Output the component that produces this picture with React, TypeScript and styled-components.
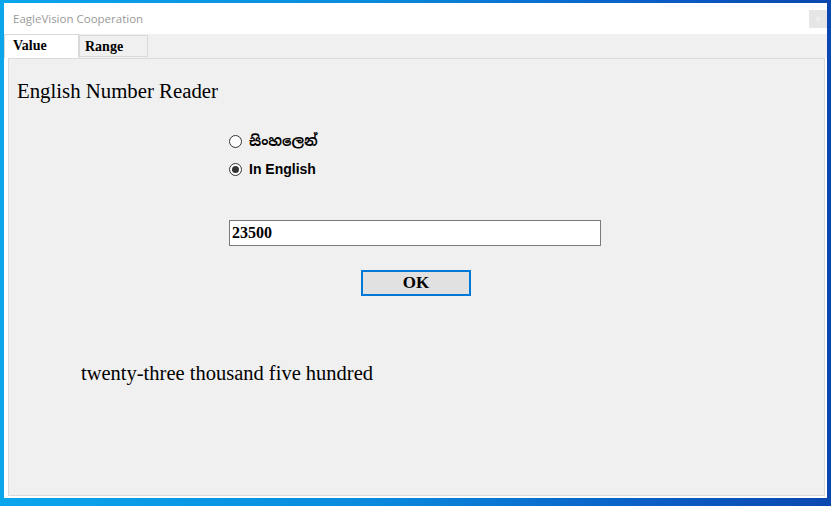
import React from "react";
import styled, { createGlobalStyle } from "styled-components";

const Global = createGlobalStyle`
  html, body { margin: 0; padding: 0; }
  body { width: 831px; height: 506px; overflow: hidden; }
`;

const Desktop = styled.div`
  width: 831px;
  height: 506px;
  box-sizing: border-box;
  padding: 3px 4px 8px 4px;
  background: linear-gradient(to right, #0aa6ec 0%, #0a8ade 45%, #0a5cc4 80%, #0a48b0 100%);
  display: flex;
`;

const Window = styled.div`
  flex: 1;
  display: flex;
  flex-direction: column;
  background: #ffffff;
`;

const TitleBar = styled.div`
  height: 31px;
  display: flex;
  align-items: center;
  justify-content: space-between;
  padding: 0 0 0 9px;
  font-family: "Open Sans", "Noto Sans", sans-serif;
  font-size: 11.5px;
  color: #9a9a9a;
`;

const CloseBox = styled.div`
  width: 18px;
  height: 18px;
  background: #e6e6e6;
  color: #f6f6f6;
  font-size: 10px;
  display: flex;
  align-items: center;
  justify-content: center;
`;

const TabRow = styled.div`
  height: 24px;
  display: flex;
  align-items: flex-end;
  background: linear-gradient(to right, #ffffff 0 1px, #f0f0f0 1px);
`;

const Tab = styled.div<{ $active?: boolean }>`
  box-sizing: border-box;
  height: ${(p) => (p.$active ? "24px" : "22px")};
  width: ${(p) => (p.$active ? "75px" : "69px")};
  padding: ${(p) => (p.$active ? "3px 0 0 8px" : "3px 0 0 5px")};
  margin-bottom: ${(p) => (p.$active ? "0" : "1px")};
  background: ${(p) => (p.$active ? "#ffffff" : "#f0f0f0")};
  border: 1px solid #d9d9d9;
  border-bottom: ${(p) => (p.$active ? "none" : "1px solid #d9d9d9")};
  font-family: "Liberation Serif", "Times New Roman", serif;
  font-weight: bold;
  font-size: 14px;
  color: #000;
`;

const PanelWrap = styled.div`
  flex: 1;
  display: flex;
  background: #ffffff;
  padding: 0 2px 2px 4px;
`;

const Panel = styled.div`
  flex: 1;
  background: #f0f0f0;
  border: 1px solid #dadada;
  display: flex;
  flex-direction: column;
  padding: 20px 0 0 8px;
`;

const Heading = styled.div`
  font-family: "Liberation Serif", "Times New Roman", serif;
  font-size: 20.8px;
  line-height: 23px;
  color: #000;
`;

const Form = styled.div`
  display: flex;
  flex-direction: column;
  margin: 32px 0 0 212px;
`;

const RadioRow = styled.label`
  display: flex;
  align-items: center;
  gap: 7px;
  height: 14px;
  margin-bottom: 14px;
  font-family: "Liberation Sans", Arial, "Noto Sans Sinhala", "Noto Sans", sans-serif;
  font-weight: bold;
  font-size: 14px;
  color: #000;
`;

const RadioCircle = styled.span<{ $checked?: boolean }>`
  box-sizing: border-box;
  width: 13px;
  height: 13px;
  border-radius: 50%;
  border: 1px solid #333;
  background: #fff;
  display: flex;
  align-items: center;
  justify-content: center;
  &::after {
    content: "";
    width: 7px;
    height: 7px;
    border-radius: 50%;
    background: ${(p) => (p.$checked ? "#333" : "transparent")};
  }
`;

const NumberInput = styled.div`
  box-sizing: border-box;
  margin-top: 30px;
  width: 372px;
  height: 26px;
  background: #fff;
  border: 1px solid #7a7a7a;
  padding: 3px 0 0 2px;
  font-family: "Liberation Serif", "Times New Roman", serif;
  font-weight: bold;
  font-size: 16px;
  color: #000;
`;

const OkButton = styled.div`
  box-sizing: border-box;
  margin: 24px 0 0 132px;
  width: 110px;
  height: 26px;
  background: #e1e1e1;
  border: 2px solid #0078d7;
  display: flex;
  align-items: center;
  justify-content: center;
  font-family: "Liberation Serif", "Times New Roman", serif;
  font-weight: bold;
  font-size: 17px;
  color: #000;
`;

const Result = styled.div`
  margin: 65px 0 0 64px;
  font-family: "Liberation Serif", "Times New Roman", serif;
  font-size: 20.5px;
  line-height: 24px;
  color: #000;
`;

export default function App() {
  return (
    <Desktop>
      <Global />
      <Window>
        <TitleBar>
          <span>EagleVision Cooperation</span>
          <CloseBox>×</CloseBox>
        </TitleBar>
        <TabRow>
          <Tab $active>Value</Tab>
          <Tab>Range</Tab>
        </TabRow>
        <PanelWrap>
          <Panel>
            <Heading>English Number Reader</Heading>
            <Form>
              <RadioRow>
                <RadioCircle />
                සිංහලෙන්
              </RadioRow>
              <RadioRow>
                <RadioCircle $checked />
                In English
              </RadioRow>
              <NumberInput>23500</NumberInput>
              <OkButton>OK</OkButton>
            </Form>
            <Result>twenty-three thousand five hundred</Result>
          </Panel>
        </PanelWrap>
      </Window>
    </Desktop>
  );
}
